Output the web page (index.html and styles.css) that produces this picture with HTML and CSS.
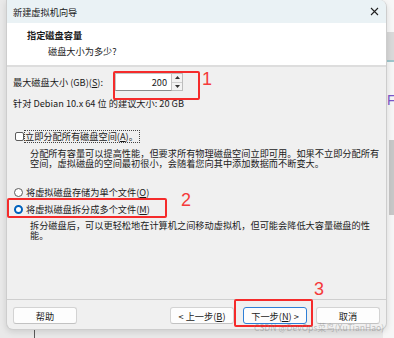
FILE: index.html
```html
<!DOCTYPE html>
<html lang="zh-CN">
<head>
<meta charset="utf-8">
<title>新建虚拟机向导</title>
<link rel="stylesheet" href="styles.css">
</head>
<body>
<div class="desk">
  <div class="backapp">
    <div class="ba-top"></div>
    <div class="ba-band"></div>
    <div class="ba-letter">F</div>
    <div class="ba-scroll"></div>
  </div>
  <div class="taskline"></div>

  <div class="dialog">
    <div class="titlebar">
      <span>新建虚拟机向导</span>
      <svg class="close" width="9" height="9" viewBox="0 0 9 9"><path d="M1 1L8 8M8 1L1 8" stroke="#222" stroke-width="1.1"/></svg>
    </div>
    <div class="header">
      <div class="h-title">指定磁盘容量</div>
      <div class="h-sub">磁盘大小为多少?</div>
    </div>
    <div class="body">
      <div class="size-row">
        <span class="size-label">最大磁盘大小 (GB)(<u>S</u>):</span>
        <div class="spin">
          <div class="spin-input">200</div>
          <div class="spin-btns">
            <div class="sb"><svg width="5" height="3" viewBox="0 0 5 3"><path d="M0 3L2.5 0L5 3Z" fill="#333"/></svg></div>
            <div class="sb"><svg width="5" height="3" viewBox="0 0 5 3"><path d="M0 0L2.5 3L5 0Z" fill="#333"/></svg></div>
          </div>
        </div>
      </div>
      <div class="rec">针对 Debian 10.x 64 位 的建议大小: 20 GB</div>
      <div class="opt check-row">
        <span class="checkbox"></span>
        <span class="focus">立即分配所有磁盘空间(<u>A</u>)。</span>
      </div>
      <div class="desc d1">
        <div>分配所有容量可以提高性能，但要求所有物理磁盘空间立即可用。如果不立即分配所有</div>
        <div>空间，虚拟磁盘的空间最初很小，会随着您向其中添加数据而不断变大。</div>
      </div>
      <div class="opt radio-row r1">
        <span class="radio"></span>
        <span>将虚拟磁盘存储为单个文件(<u>O</u>)</span>
      </div>
      <div class="opt radio-row r2">
        <span class="radio on"></span>
        <span>将虚拟磁盘拆分成多个文件(<u>M</u>)</span>
      </div>
      <div class="desc d2">
        <div>拆分磁盘后，可以更轻松地在计算机之间移动虚拟机，但可能会降低大容量磁盘的性</div>
        <div>能。</div>
      </div>
    </div>
    <div class="footer">
      <button class="btn">帮助</button>
      <div class="spacer"></div>
      <button class="btn">&lt; 上一步(<u>B</u>)</button>
      <button class="btn primary">下一步(<u>N</u>) &gt;</button>
      <button class="btn">取消</button>
    </div>
  </div>

  <div class="mark box1"></div>
  <div class="num n1">1</div>
  <div class="mark box2"></div>
  <div class="num n2">2</div>
  <div class="mark box3"></div>
  <div class="num n3">3</div>
  <div class="watermark">CSDN @DevOps菜鸟(XuTianHao)</div>
</div>
</body>
</html>
```

FILE: styles.css
```css
* { box-sizing: border-box; }
html, body {
  margin: 0;
  padding: 0;
}
body {
  width: 394px;
  height: 338px;
  overflow: hidden;
  background: #e9e9e9;
  font-family: "Noto Sans CJK SC", "Noto Sans", sans-serif;
  font-size: 9.2px;
  color: #1b1b1b;
}
u { text-decoration: underline; text-underline-offset: 1px; }

.desk {
  position: relative;
  width: 394px;
  height: 338px;
  padding: 0 0 0 6px;
}

/* background application peeking out on the right */
.backapp {
  position: absolute;
  left: 383px;
  top: 0;
  width: 11px;
  height: 338px;
  background: #f6f6f6;
  overflow: hidden;
}
.ba-top { height: 32px; background: #f7f7f7; }
.ba-band { height: 30px; background: #d9d9d9; border-bottom: 2px solid #9fc6cc; }
.ba-letter {
  position: absolute;
  left: 4px;
  top: 92px;
  font-size: 14px;
  line-height: 16px;
  color: #7b57c9;
  font-family: "Liberation Sans", sans-serif;
}
.ba-scroll {
  position: absolute;
  left: 6px;
  top: 140px;
  width: 5px;
  height: 75px;
  background: #c7c7c7;
}
.taskline {
  position: absolute;
  left: 34px;
  top: 326px;
  width: 1px;
  height: 12px;
  background: #5a5a5a;
}

.dialog {
  position: relative;
  width: 381px;
  height: 330px;
  background: #f0f0f0;
  border: 1px solid #cdcdcd;
  border-top: none;
  border-radius: 0 7px 7px 7px;
  overflow: hidden;
  display: flex;
  flex-direction: column;
  box-shadow: 0 2px 6px rgba(0,0,0,0.12);
}

.titlebar {
  height: 23px;
  flex: none;
  background: #eaf2f5;
  display: flex;
  align-items: center;
  justify-content: space-between;
  padding: 0 6px 0 6px;
}
.close { margin-right: 1px; }

.header {
  height: 44px;
  flex: none;
  background: #ffffff;
  border-bottom: 2px solid #dddddd;
  padding: 5px 0 0 20px;
  line-height: 14px;
}
.h-title { font-weight: 700; }
.h-sub { padding-left: 21px; margin-top: 2px; }

.body {
  flex: 1;
  padding: 0 6px;
  line-height: 12px;
}

.size-row {
  margin-top: 6px;
  height: 18px;
  display: flex;
  align-items: center;
}
.size-label { width: 102px; flex: none; }
.spin {
  display: flex;
  height: 18px;
}
.spin-input {
  width: 57px;
  height: 18px;
  background: #ffffff;
  border: 1px solid #c4c4c4;
  border-bottom-color: #8a8a8a;
  text-align: right;
  padding-right: 4px;
  line-height: 16px;
}
.spin-btns {
  width: 11px;
  height: 18px;
  display: flex;
  flex-direction: column;
  border: 1px solid #bdbdbd;
  border-left: none;
  background: #f3f3f3;
}
.sb {
  flex: 1;
  display: flex;
  align-items: center;
  justify-content: center;
}
.sb + .sb { border-top: 1px solid #cfcfcf; }

.rec {
  margin-top: 7px;
  line-height: 11px;
}

.opt {
  height: 12px;
  display: flex;
  align-items: center;
}
.check-row { margin-top: 21px; padding-left: 2px; }
.checkbox {
  width: 9px;
  height: 9px;
  border: 1px solid #5c5c5c;
  border-radius: 2px;
  background: #fff;
  margin-right: 1px;
  flex: none;
}
.focus {
  outline: 1px dotted #444;
  outline-offset: 0;
  line-height: 11px;
  padding-right: 1px;
}

.desc {
  line-height: 10px;
  padding-left: 17px;
  white-space: nowrap;
}
.d1 { margin-top: 6px; }
.radio-row { padding-left: 1px; }
.r1 { margin-top: 18px; }
.r2 { margin-top: 5px; }
.radio {
  width: 9px;
  height: 9px;
  border-radius: 50%;
  border: 1px solid #5c5c5c;
  background: #fff;
  margin-right: 3px;
  flex: none;
}
.radio.on {
  border: 2.6px solid #0062bd;
  background: #fff;
}
.d2 { margin-top: 5px; }

.footer {
  height: 30px;
  flex: none;
  border-top: 1px solid #cfcfcf;
  padding: 7px 6px 0 6px;
  display: flex;
  align-items: flex-start;
  gap: 9px;
}
.spacer { flex: 1; }
.btn {
  width: 64px;
  height: 17px;
  padding: 0;
  font: inherit;
  color: #1b1b1b;
  background: #fdfdfd;
  border: 1px solid #d3d3d3;
  border-bottom-color: #c2c2c2;
  border-radius: 3px;
  line-height: 14px;
}
.btn.primary { border-color: #2f7fd6; }

/* annotations */
.mark {
  position: absolute;
  border: 2px solid #f52b2b;
  border-radius: 2px;
}
.box1 { left: 113px; top: 71px; width: 87px; height: 29px; }
.box2 { left: 7px; top: 198px; width: 160px; height: 20px; }
.box3 { left: 234px; top: 299px; width: 79px; height: 28px; }
.num {
  position: absolute;
  color: #f53a3a;
  font-family: "Liberation Sans", "DejaVu Sans", sans-serif;
  font-size: 18px;
  line-height: 18px;
}
.n1 { left: 202px; top: 70px; }
.n2 { left: 181px; top: 191px; }
.n3 { left: 314px; top: 280px; }
.watermark {
  position: absolute;
  left: 254px;
  top: 321px;
  font-size: 8.6px;
  line-height: 12px;
  color: rgba(120,120,120,0.45);
  white-space: nowrap;
}
```
